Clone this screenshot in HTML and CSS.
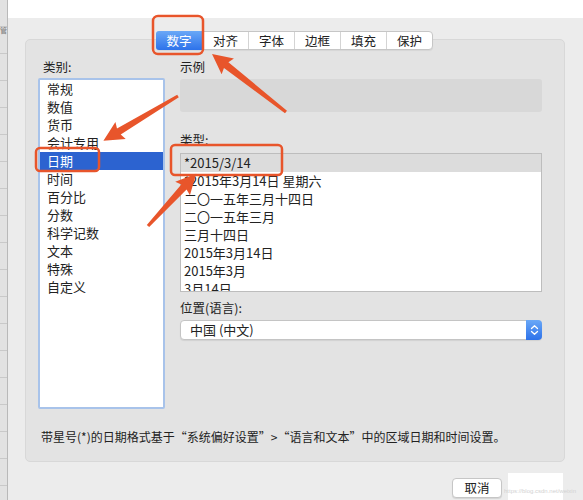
FILE: index.html
```html
<!DOCTYPE html>
<html lang="zh-CN">
<head>
<meta charset="utf-8">
<title>设置单元格格式</title>
<link rel="stylesheet" href="styles.css">
</head>
<body>
<div class="window">
  <div class="side"><span class="side-char">管</span></div>
  <div class="main">
    <div class="topbar"></div>
    <div class="tabs">
      <div class="tab active">数字</div>
      <div class="tab">对齐</div>
      <div class="tab">字体</div>
      <div class="tab">边框</div>
      <div class="tab">填充</div>
      <div class="tab">保护</div>
    </div>
    <div class="panel">
      <div class="cols">
        <div class="left">
          <div class="label">类别:</div>
          <div class="listbox">
            <div class="item">常规</div>
            <div class="item">数值</div>
            <div class="item">货币</div>
            <div class="item">会计专用</div>
            <div class="item selected">日期</div>
            <div class="item">时间</div>
            <div class="item">百分比</div>
            <div class="item">分数</div>
            <div class="item">科学记数</div>
            <div class="item">文本</div>
            <div class="item">特殊</div>
            <div class="item">自定义</div>
          </div>
        </div>
        <div class="right">
          <div class="label">示例</div>
          <div class="sample"></div>
          <div class="label label-type">类型:</div>
          <div class="typelist">
            <div class="trow current">*2015/3/14</div>
            <div class="trow">*2015年3月14日 星期六</div>
            <div class="trow">二〇一五年三月十四日</div>
            <div class="trow">二〇一五年三月</div>
            <div class="trow">三月十四日</div>
            <div class="trow">2015年3月14日</div>
            <div class="trow">2015年3月</div>
            <div class="trow">3月14日</div>
          </div>
          <div class="label label-loc">位置(语言):</div>
          <div class="select">
            <span class="select-text">中国 (中文)</span>
            <span class="stepper">
              <svg width="9" height="12" viewBox="0 0 9 12"><path d="M1.5 4.5 L4.5 1.8 L7.5 4.5 M1.5 7.5 L4.5 10.2 L7.5 7.5" fill="none" stroke="#fff" stroke-width="1.3" stroke-linecap="round" stroke-linejoin="round"/></svg>
            </span>
          </div>
        </div>
      </div>
      <div class="note">带星号(*)的日期格式基于“系统偏好设置”&gt;“语言和文本”中的区域日期和时间设置。</div>
    </div>
    <div class="buttons">
      <div class="cancel">取消</div>
      <div class="wm"><span class="wm-text">https://blog.csdn.net/weixin</span></div>
    </div>
  </div>
</div>
<svg class="overlay" width="583" height="500" viewBox="0 0 583 500">
  <g fill="none" stroke="#e8552b" stroke-width="2.5">
    <rect x="153" y="16" width="50" height="38" rx="5"/>
    <rect x="36" y="148" width="63" height="23" rx="4"/>
    <rect x="171" y="145" width="111" height="30" rx="4"/>
  </g>
  <g fill="#e8552b">
    <g transform="translate(286 112) rotate(-141.9)">
      <polygon points="0,-1.6 76,-3.6 74,-10 94,0 74,10 76,3.6 0,1.6"/>
    </g>
    <g transform="translate(178 96) rotate(149)">
      <polygon points="0,-1.6 69,-3.6 67,-10 87,0 67,10 69,3.6 0,1.6"/>
    </g>
    <g transform="translate(148 226) rotate(-47.3)">
      <polygon points="0,-1.6 53,-3.6 51,-10 71,0 51,10 53,3.6 0,1.6"/>
    </g>
  </g>
</svg>
</body>
</html>
```

FILE: styles.css
```css
* { box-sizing: border-box; }
html, body {
  margin: 0;
  padding: 0;
}
body {
  width: 583px;
  height: 500px;
  overflow: hidden;
  position: relative;
  background: #ececec;
  font-family: "Noto Sans CJK SC", "Noto Sans", sans-serif;
  font-size: 13px;
  color: #222;
}
.window {
  display: flex;
  height: 500px;
}
.side {
  width: 8px;
  flex: none;
  background: repeating-linear-gradient(180deg, #e2e2e2 0, #e2e2e2 26px, #c9c9c9 26px, #c9c9c9 27px);
  border-right: 1px solid #b9b9b9;
  overflow: hidden;
  position: relative;
}
.side-char {
  display: block;
  margin-top: 26px;
  margin-left: 0;
  font-size: 7px;
  line-height: 8px;
  color: #777;
}
.main {
  flex: 1;
  display: flex;
  flex-direction: column;
}
.topbar {
  height: 18px;
  background: #fff;
  flex: none;
}
.tabs {
  display: flex;
  align-self: flex-start;
  margin: 13px 0 0 148px;
  height: 19px;
  background: #fff;
  border: 1px solid #c6c6c6;
  border-radius: 4px;
  position: relative;
  z-index: 1;
  box-shadow: 0 1px 1px rgba(0,0,0,0.06);
}
.tab {
  width: 46px;
  height: 17px;
  line-height: 17px;
  text-align: center;
  font-size: 12.5px;
  color: #222;
  border-left: 1px solid #d4d4d4;
}
.tab:first-child { border-left: none; }
.tab.active {
  background: linear-gradient(#6aa8f7, #2d72ea);
  color: #fff;
  border-radius: 3px 0 0 3px;
  margin: -1px 0 -1px -1px;
  height: 19px;
  line-height: 19px;
}
.panel {
  margin: -11px 0 0 17px;
  width: 540px;
  height: 423px;
  background: #e3e3e3;
  border: 1px solid #d8d8d8;
  border-radius: 5px;
  padding: 18px 22px 0 12px;
}
.cols {
  display: flex;
  gap: 15px;
}
.left {
  width: 127px;
  flex: none;
}
.label {
  height: 18px;
  line-height: 18px;
  font-size: 12.5px;
  padding-left: 5px;
  color: #222;
}
.right .label { padding-left: 0; }
.listbox {
  margin-top: 2px;
  height: 331px;
  background: #fff;
  border: 2px solid #a8c3ea;
  border-radius: 2px;
}
.item {
  height: 18px;
  line-height: 18px;
  padding-left: 7px;
}
.item.selected {
  background: #2c63d0;
  color: #fff;
}
.right {
  width: 362px;
  flex: none;
}
.sample {
  margin-top: 3px;
  height: 33px;
  background: #d8d8d8;
  border-radius: 3px;
}
.label-type { margin-top: 19px; }
.typelist {
  margin-top: 4px;
  height: 139px;
  background: #fff;
  border: 1px solid #bdbdbd;
  overflow: hidden;
}
.trow {
  height: 18px;
  line-height: 18px;
  padding-left: 3px;
}
.trow.current { background: #dcdcdc; }
.label-loc { margin-top: 7px; }
.select {
  margin-top: 3px;
  height: 20px;
  display: flex;
  align-items: center;
  background: #fff;
  border: 1px solid #c4c4c4;
  border-radius: 4px;
  box-shadow: 0 1px 1px rgba(0,0,0,0.08);
}
.select-text {
  flex: 1;
  padding-left: 9px;
  line-height: 18px;
}
.stepper {
  width: 16px;
  height: 20px;
  margin: -1px -1px -1px 0;
  background: linear-gradient(#6aa8f7, #2d72ea);
  border-radius: 0 4px 4px 0;
  display: flex;
  align-items: center;
  justify-content: center;
}
.note {
  margin-top: 19px;
  height: 18px;
  line-height: 18px;
  font-size: 12px;
  padding-left: 3px;
}
.buttons {
  display: flex;
  align-items: flex-start;
  margin: 11px 0 0 444px;
}
.cancel {
  margin-top: 5px;
  width: 50px;
  height: 20px;
  line-height: 18px;
  text-align: center;
  background: #fff;
  border: 1px solid #c6c6c6;
  border-radius: 4px;
  box-shadow: 0 1px 1px rgba(0,0,0,0.1);
  font-size: 12.5px;
}
.wm {
  margin-left: 6px;
  width: 55px;
  height: 27px;
  background: #fff;
  position: relative;
}
.wm-text {
  position: absolute;
  left: -4px;
  top: 15px;
  font-size: 6px;
  color: #d2d2d2;
  white-space: nowrap;
  font-family: "Liberation Sans", sans-serif;
}
.overlay {
  position: absolute;
  left: 0;
  top: 0;
  pointer-events: none;
  z-index: 5;
}
```
